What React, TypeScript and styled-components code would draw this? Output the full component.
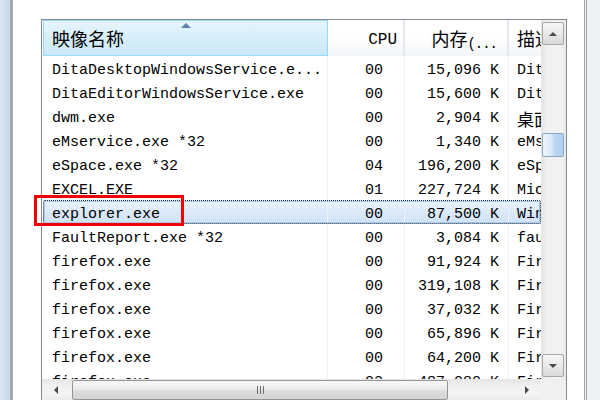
import React from 'react';
import styled, { createGlobalStyle } from 'styled-components';

const GlobalStyle = createGlobalStyle`
  html, body {
    margin: 0;
    padding: 0;
    background: #fff;
    overflow: hidden;
  }
`;

const COLS = '285px 77px 104px 160px';

const Screen = styled.div`
  position: relative;
  width: 600px;
  height: 400px;
  display: flex;
  overflow: hidden;
  font-family: 'Liberation Mono', 'Noto Sans CJK SC', monospace;
  font-size: 15px;
  color: #000;
`;

const SideStrip = styled.div`
  flex: none;
  width: 10px;
  background: linear-gradient(to right, #d9e6f3, #c4d7eb);
  border-right: 3px solid #a4a9b0;
`;

const Workspace = styled.div`
  flex: none;
  width: 571px;
  box-sizing: border-box;
  padding: 19px 0 0 28px;
`;

const RightFrame = styled.div`
  flex: 1;
  border-left: 3px double #a3a6aa;
  background: #eef0f3;
`;

const ListView = styled.div`
  box-sizing: border-box;
  width: 526px;
  height: 383px;
  border: 1px solid #828790;
  background: #fff;
  display: flex;
  flex-direction: column;
`;

const ListBody = styled.div`
  flex: 1;
  display: flex;
  min-height: 0;
`;

const Table = styled.div`
  flex: 1;
  overflow: hidden;
  padding-left: 1px;
`;

const Header = styled.div`
  display: grid;
  grid-template-columns: ${COLS};
  height: 36px;
`;

const HeaderCell = styled.div<{ $sorted?: boolean; $align?: 'left' | 'right'; $pad?: number }>`
  box-sizing: border-box;
  display: grid;
  grid-template-rows: 6px 1fr;
  align-items: center;
  justify-items: ${p => (p.$align === 'right' ? 'end' : 'start')};
  padding: ${p => (p.$align === 'right' ? `0 ${p.$pad ?? 8}px 0 0` : `0 0 0 ${p.$pad ?? 8}px`)};
  white-space: nowrap;
  overflow: hidden;
  background: ${p =>
    p.$sorted
      ? 'linear-gradient(#e6f5fd, #d8effa 45%, #c9e8f7)'
      : 'linear-gradient(#ffffff, #ffffff 45%, #f3f5f7)'};
  border: ${p => (p.$sorted ? '1px solid #96d9f9' : 'none')};
  border-right: ${p => (p.$sorted ? '1px solid #96d9f9' : '2px solid #e6e9ed')};
  font-size: 16px;
`;

const SortArrow = styled.span`
  justify-self: center;
  align-self: start;
  margin: 2px 0 0 -8px;
  width: 0;
  height: 0;
  border-left: 5px solid transparent;
  border-right: 5px solid transparent;
  border-bottom: 5px solid #5a82aa;
`;

const HeaderText = styled.span`
  grid-row: 2;
  margin-top: -2px;
`;

const HeaderCjk = styled.span`
  position: relative;
  top: -2px;
  font-family: 'Noto Sans CJK SC', sans-serif;
  font-size: 18px;
`;

const Dots = styled.span`
  font-size: 14px;
  letter-spacing: -1px;
`;

const Cjk = styled.span`
  font-family: 'Noto Sans CJK SC', sans-serif;
  font-size: 17px;
`;

const Row = styled.div<{ $selected?: boolean }>`
  position: relative;
  display: grid;
  grid-template-columns: ${COLS};
  height: 24px;
  white-space: nowrap;
  background: ${p => (p.$selected ? 'linear-gradient(#edf4fc, #dae9f9 50%, #cfe2f8)' : 'transparent')};

  &::after {
    content: '';
    display: ${p => (p.$selected ? 'block' : 'none')};
    position: absolute;
    inset: 0;
    border: 1px dotted #1d2a3a;
    box-shadow: inset 0 0 0 1px #a9c8ec;
    border-radius: 2px;
  }
`;

const Cell = styled.div<{ $align?: 'left' | 'right'; $pad: number }>`
  box-sizing: border-box;
  height: 24px;
  overflow: hidden;
  padding-top: 4px;
  line-height: 22px;
  text-align: ${p => p.$align ?? 'left'};
  padding-left: ${p => (p.$align === 'right' ? 0 : p.$pad)}px;
  padding-right: ${p => (p.$align === 'right' ? p.$pad : 0)}px;
  border-right: 1px solid #edf2f8;
`;

const VScroll = styled.div`
  flex: none;
  width: 25px;
  display: flex;
  flex-direction: column;
  background: linear-gradient(to right, #e4e4e4, #f0f0f0 25%, #f3f3f3 75%, #e8e8e8);
`;

const ScrollButton = styled.div<{ $bottom?: boolean }>`
  box-sizing: border-box;
  height: 23px;
  margin: ${p => (p.$bottom ? '0 2px 2px 1px' : '2px 2px 0 1px')};
  border: 1px solid #a6a6a6;
  border-radius: 2px;
  background: linear-gradient(#f6f6f6, #e9e9e9 50%, #d9d9d9);
  display: flex;
  align-items: center;
  justify-content: center;
`;

const VThumb = styled.div`
  box-sizing: border-box;
  height: 24px;
  margin: 88px 2px 0 1px;
  border: 1px solid #8ba7c7;
  border-radius: 2px;
  background: linear-gradient(to right, #eef5fc, #d7e8f8 45%, #bcd9f3 55%, #aed1f0);
`;

const Track = styled.div`
  flex: 1;
`;

const BottomBar = styled.div`
  flex: none;
  height: 22px;
  display: flex;
`;

const HScroll = styled.div`
  flex: 1;
  display: flex;
  align-items: stretch;
  background: linear-gradient(#e5e5e5, #f1f1f1 30%, #f3f3f3 70%, #e8e8e8);
`;

const ArrowSlot = styled.div`
  flex: none;
  width: 28px;
  display: flex;
  align-items: center;
  justify-content: center;
`;

const HThumb = styled.div`
  box-sizing: border-box;
  width: 376px;
  margin: 1px 0 1px 2px;
  border: 1px solid #979797;
  border-radius: 2px;
  background: linear-gradient(#f7f7f7, #ececec 45%, #dddddd 55%, #d3d3d3);
  display: flex;
  align-items: center;
  justify-content: center;
`;

const Corner = styled.div`
  flex: none;
  width: 25px;
  background: #f0f0f0;
`;

const Annotation = styled.div`
  position: absolute;
  left: 34px;
  top: 195px;
  width: 150px;
  height: 31px;
  box-sizing: border-box;
  border: 3px solid #f00000;
  pointer-events: none;
`;

type Proc = { name: string; cpu: string; mem: string; desc: React.ReactNode; selected?: boolean };

const procs: Proc[] = [
  { name: 'DitaDesktopWindowsService.e...', cpu: '00', mem: '15,096 K', desc: 'DitaDesktop' },
  { name: 'DitaEditorWindowsService.exe', cpu: '00', mem: '15,600 K', desc: 'DitaEditor' },
  { name: 'dwm.exe', cpu: '00', mem: '2,904 K', desc: <Cjk>桌面窗口管理器</Cjk> },
  { name: 'eMservice.exe *32', cpu: '00', mem: '1,340 K', desc: 'eMservice' },
  { name: 'eSpace.exe *32', cpu: '04', mem: '196,200 K', desc: 'eSpace' },
  { name: 'EXCEL.EXE', cpu: '01', mem: '227,724 K', desc: 'Microsoft Excel' },
  { name: 'explorer.exe', cpu: '00', mem: '87,500 K', desc: 'Windows', selected: true },
  { name: 'FaultReport.exe *32', cpu: '00', mem: '3,084 K', desc: 'faultrep' },
  { name: 'firefox.exe', cpu: '00', mem: '91,924 K', desc: 'Firefox' },
  { name: 'firefox.exe', cpu: '00', mem: '319,108 K', desc: 'Firefox' },
  { name: 'firefox.exe', cpu: '00', mem: '37,032 K', desc: 'Firefox' },
  { name: 'firefox.exe', cpu: '00', mem: '65,896 K', desc: 'Firefox' },
  { name: 'firefox.exe', cpu: '00', mem: '64,200 K', desc: 'Firefox' },
  { name: 'firefox.exe', cpu: '03', mem: '487,080 K', desc: 'Firefox' },
];

const Tri = ({ dir }: { dir: 'up' | 'down' | 'left' | 'right' }) => {
  const pts = {
    up: '0,5 4,1 8,5',
    down: '0,1 4,5 8,1',
    left: '5,0 1,4 5,8',
    right: '1,0 5,4 1,8',
  }[dir];
  const wide = dir === 'up' || dir === 'down';
  return (
    <svg width={wide ? 8 : 6} height={wide ? 6 : 8} viewBox={wide ? '0 0 8 6' : '0 0 6 8'}>
      <polygon points={pts} fill="#4a4a4a" />
    </svg>
  );
};

const Gripper = () => (
  <svg width="9" height="8" viewBox="0 0 9 8">
    <path d="M1.5 0v8M4.5 0v8M7.5 0v8" stroke="#6b6b6b" strokeWidth="1" />
  </svg>
);

export default function App() {
  return (
    <Screen>
      <GlobalStyle />
      <SideStrip />
      <Workspace>
        <ListView>
          <ListBody>
            <Table>
              <Header>
                <HeaderCell $sorted>
                  <SortArrow />
                  <HeaderText>
                    <HeaderCjk>映像名称</HeaderCjk>
                  </HeaderText>
                </HeaderCell>
                <HeaderCell $align="right" $pad={6}>
                  <HeaderText>CPU</HeaderText>
                </HeaderCell>
                <HeaderCell $align="right" $pad={10}>
                  <HeaderText>
                    <HeaderCjk>内存</HeaderCjk>
                    <Dots>(...</Dots>
                  </HeaderText>
                </HeaderCell>
                <HeaderCell>
                  <HeaderText>
                    <HeaderCjk>描述</HeaderCjk>
                  </HeaderText>
                </HeaderCell>
              </Header>
              {procs.map((p, i) => (
                <Row key={i} $selected={p.selected}>
                  <Cell $pad={9}>{p.name}</Cell>
                  <Cell $align="right" $pad={21}>{p.cpu}</Cell>
                  <Cell $align="right" $pad={9}>{p.mem}</Cell>
                  <Cell $pad={8}>{p.desc}</Cell>
                </Row>
              ))}
            </Table>
            <VScroll>
              <ScrollButton>
                <Tri dir="up" />
              </ScrollButton>
              <VThumb />
              <Track />
              <ScrollButton $bottom>
                <Tri dir="down" />
              </ScrollButton>
            </VScroll>
          </ListBody>
          <BottomBar>
            <HScroll>
              <ArrowSlot>
                <Tri dir="left" />
              </ArrowSlot>
              <HThumb>
                <Gripper />
              </HThumb>
              <Track />
              <ArrowSlot>
                <Tri dir="right" />
              </ArrowSlot>
            </HScroll>
            <Corner />
          </BottomBar>
        </ListView>
      </Workspace>
      <RightFrame />
      <Annotation />
    </Screen>
  );
}
